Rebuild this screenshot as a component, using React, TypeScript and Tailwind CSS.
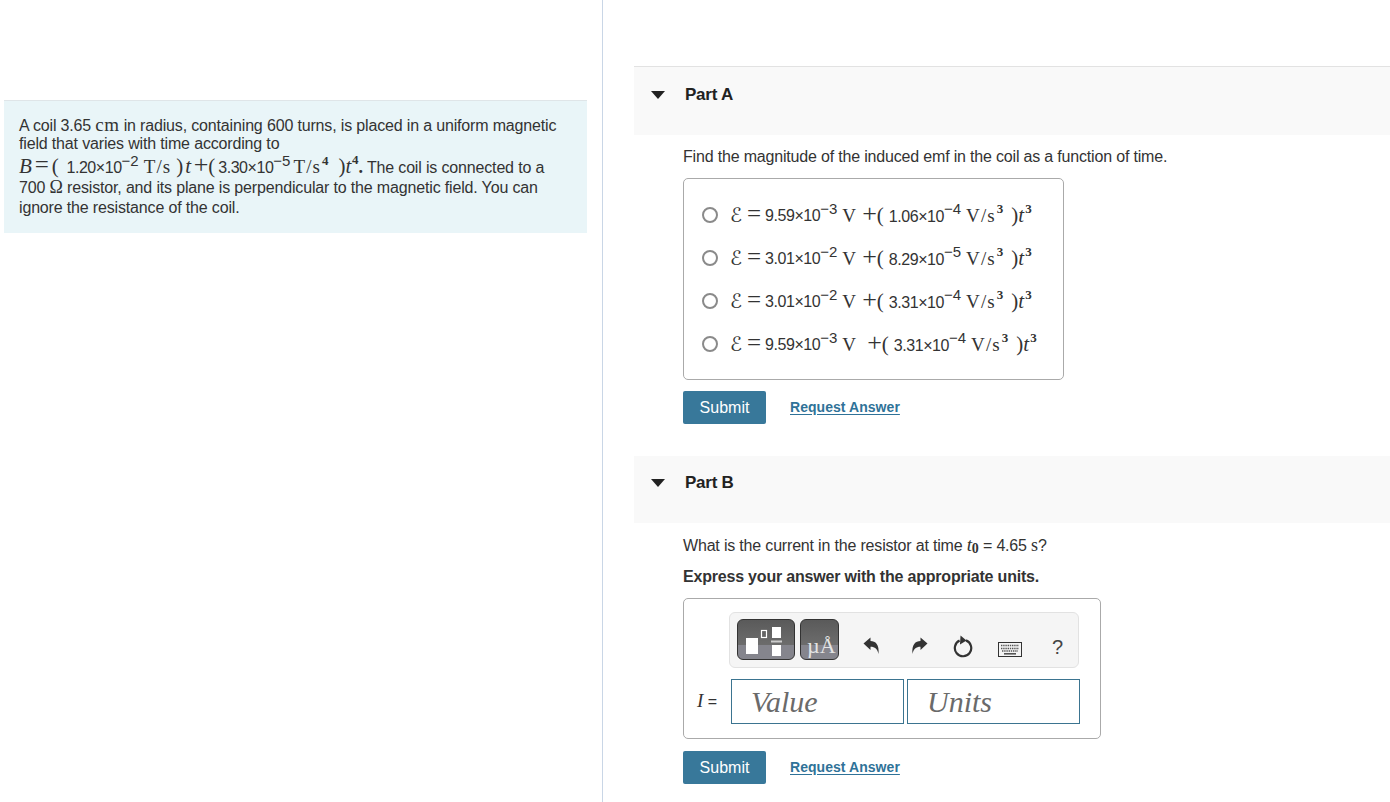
import React from 'react';

const serif = "font-['Liberation_Serif',serif]";

const Sup: React.FC<{ children: React.ReactNode }> = ({ children }) => (
  <sup className={`${serif} relative top-[-1px] ml-[1px] align-super text-[13px] font-bold leading-none tracking-[0]`}>{children}</sup>
);

const Sci: React.FC<{ n: string; e: string }> = ({ n, e }) => (
  <span className="text-[16px] tracking-[-0.45px]">
    {n}×10<sup className="relative top-[-1px] align-super text-[15px] leading-none tracking-[0]">{e}</sup>
  </span>
);

const Unit: React.FC<{ children: React.ReactNode }> = ({ children }) => (
  <span className={`${serif} text-[19px] tracking-[1.1px] text-[#333]`}>{children}</span>
);

const options = [
  { a: '9.59', ae: '−3', b: '1.06', be: '−4', wide: false },
  { a: '3.01', ae: '−2', b: '8.29', be: '−5', wide: false },
  { a: '3.01', ae: '−2', b: '3.31', be: '−4', wide: false },
  { a: '9.59', ae: '−3', b: '3.31', be: '−4', wide: true },
];

const PartHeader: React.FC<{ title: string; first?: boolean; className?: string }> = ({ title, first, className }) => (
  <div className={`flex items-start bg-[#f9f9f9] pl-[17px] ${className}`}>
    <svg width="14" height="8" viewBox="0 0 14 8" className={`shrink-0 ${first ? 'mt-[24px]' : 'mt-[23px]'}`}>
      <path d="M0 0H14L7 8Z" fill="#222" />
    </svg>
    <h2 className={`ml-[20px] text-[17px] font-bold leading-5 tracking-[-0.25px] text-[#222] ${first ? 'mt-[18px]' : 'mt-[17px]'}`}>{title}</h2>
  </div>
);

const Actions: React.FC = () => (
  <div className="flex items-center">
    <button className="h-[33px] w-[83px] rounded-[2px] bg-[#38789a] text-[16px] text-white">Submit</button>
    <a className="ml-6 text-[14px] font-bold tracking-[0.05px] text-[#2f7298] underline underline-offset-2">Request Answer</a>
  </div>
);

const ToolButton: React.FC<{ className: string; children: React.ReactNode }> = ({ className, children }) => (
  <div className={`relative mt-[6px] h-[41px] shrink-0 self-start overflow-hidden rounded-[6px] border border-[#333] bg-[linear-gradient(#5a5a5a,#6c6c6c_63%,#85858d_63%,#85858d)] ${className}`}>
    {children}
  </div>
);

export default function App() {
  return (
    <div className="flex h-[802px] overflow-hidden bg-white font-['Liberation_Sans',sans-serif] text-[#333]">
      {/* Left column */}
      <div className="w-[603px] shrink-0 border-r border-[#c9d6e6] pl-1 pr-[15px] pt-[100px]">
        <div className="h-[133px] border-t border-[#dfe5e8] bg-[#e9f5f8] pl-[15px] pr-6 pt-[14px] text-[16px] leading-[20px] tracking-[-0.16px]">
          <p className="h-[19px] whitespace-nowrap">
            A coil 3.65 <span className={`${serif} text-[19px] tracking-[0.4px]`}>cm</span> in radius, containing 600 turns, is placed in a uniform magnetic
          </p>
          <p className="h-[20px]">field that varies with time according to</p>
          <p className="h-[24px] whitespace-nowrap">
            <span className={`${serif} text-[21px] italic`}>B</span>
            <span className={`${serif} ml-[3px] text-[25px]`}>=</span>
            <span className={`${serif} ml-[3px] text-[21px]`}>(</span>
            <span className="ml-[8px]"><Sci n="1.20" e="−2" /></span>
            <span className="ml-[5px]"><Unit>T/s</Unit></span>
            <span className={`${serif} ml-[5px] text-[21px]`}>)<i className="ml-[2px]">t</i></span>
            <span className={`${serif} ml-[3px] text-[26px]`}>+</span>
            <span className={`${serif} text-[21px]`}>(</span>
            <span className="ml-[3px]"><Sci n="3.30" e="−5" /></span>
            <span className="ml-[3px]"><Unit>T/s<Sup>4</Sup></Unit></span>
            <span className={`${serif} ml-[10px] text-[21px]`}>)<i>t</i><Sup>4</Sup></span>
            <b className={`${serif} text-[18px]`}>.</b> The coil is connected to a
          </p>
          <p className="-mt-[1px] h-[21px] whitespace-nowrap">
            700 <span className={`${serif} text-[18px]`}>Ω</span> resistor, and its plane is perpendicular to the magnetic field. You can
          </p>
          <p>ignore the resistance of the coil.</p>
        </div>
      </div>

      {/* Right column */}
      <div className="min-w-0 flex-1 pl-[31px] pt-[66px]">
        <PartHeader title="Part A" first className="h-[69px] border-t border-[#e2e2e2]" />
        <div className="pl-[49px]">
          <p className="mt-[12px] text-[16px] leading-5 tracking-[-0.18px]">Find the magnitude of the induced emf in the coil as a function of time.</p>
          <div className="mt-[11px] flex h-[202px] w-[381px] flex-col rounded-[5px] border border-[#aaa] pl-[18px] pt-[14px]">
            {options.map((o, i) => (
              <div key={i} className="flex h-[43px] items-center whitespace-nowrap">
                <span className="h-[16px] w-[16px] shrink-0 rounded-full border-2 border-[#8a8a8a] bg-white" />
                <span className="ml-[12px] flex items-baseline leading-[20px]">
                  <span className="w-[14px] font-['DejaVu_Sans',sans-serif] text-[20px]">ℰ</span>
                  <span className={`${serif} ml-[3px] mr-[4px] text-[25px]`}>=</span>
                  <Sci n={o.a} e={o.ae} />
                  <span className="ml-[5px]"><Unit>V</Unit></span>
                  <span className={`${serif} text-[26px] ${o.wide ? 'ml-[10px]' : 'ml-[5px]'}`}>+</span>
                  <span className={`${serif} text-[21px]`}>(</span>
                  <span className="ml-[5px]"><Sci n={o.b} e={o.be} /></span>
                  <span className="ml-[5px]"><Unit>V/s<Sup>3</Sup></Unit></span>
                  <span className={`${serif} ml-[8px] text-[21px]`}>)<i>t</i><Sup>3</Sup></span>
                </span>
              </div>
            ))}
          </div>
          <div className="mt-[11px]"><Actions /></div>
        </div>

        <PartHeader title="Part B" className="mt-[32px] h-[67px]" />
        <div className="pl-[49px]">
          <p className="mt-[12px] h-5 text-[16px] leading-5 tracking-[-0.18px]">
            What is the current in the resistor at time <span className={`${serif} text-[19px] italic`}>t</span><span className={`${serif} relative top-[2px] text-[14px] font-bold`}>0</span> = 4.65 <span className={`${serif} text-[18px]`}>s</span>?
          </p>
          <p className="mt-[12px] text-[16px] font-bold leading-5 tracking-[-0.2px]">Express your answer with the appropriate units.</p>
          <div className="mt-[11px] h-[141px] w-[418px] rounded-[5px] border border-[#aaa] pl-[13px] pt-[13px]">
            <div className="ml-[32px] flex h-[56px] w-[350px] items-center rounded-[6px] border border-[#e2e2e2] bg-[#f5f5f5] pl-[7px]">
              <ToolButton className="w-[58px]">
                <svg width="56" height="39" viewBox="0 0 56 39" className="block">
                  <rect x="8" y="18" width="12" height="16" fill="#fff" />
                  <rect x="23.5" y="10.5" width="5" height="7" fill="none" stroke="#fff" strokeWidth="1.2" />
                  <rect x="34" y="7" width="9" height="11" fill="#fff" />
                  <rect x="33" y="20.5" width="11" height="2" fill="#ccc" />
                  <rect x="34" y="25" width="9" height="11" fill="#fff" />
                </svg>
              </ToolButton>
              <ToolButton className="ml-[5px] w-[39px]">
                <span className={`${serif} absolute bottom-[2px] left-[6px] whitespace-nowrap text-[22px] leading-none text-[#e4e4e4]`}>µÅ</span>
              </ToolButton>
              <svg width="18" height="18" viewBox="0 0 18 18" className="ml-[24px] mt-[12px] shrink-0">
                <path d="M0.5 6.5 7.5 0.5V4C12.5 4 16.5 7.5 15.5 17 14.5 12 12 9.8 7.5 9.8V13Z" fill="#333" />
              </svg>
              <svg width="18" height="18" viewBox="0 0 18 18" className="ml-[29px] mt-[12px] shrink-0">
                <path d="M17.5 6.5 10.5 0.5V4C5.5 4 1.5 7.5 2.5 17 3.5 12 6 9.8 10.5 9.8V13Z" fill="#333" />
              </svg>
              <svg width="20" height="24" viewBox="0 0 20 24" className="ml-[25px] mt-[14px] shrink-0">
                <path d="M6.6 5.6A8.2 8.2 0 1 0 13 5.4" fill="none" stroke="#333" strokeWidth="2.2" />
                <path d="M7.5 0.5 13.5 5.5 7 9.5Z" fill="#333" />
              </svg>
              <svg width="24" height="15" viewBox="0 0 24 15" className="ml-[25px] mt-[18px] shrink-0">
                <rect x="0.5" y="0.5" width="23" height="14" fill="#f4f4f4" stroke="#333" />
                <path d="M3 3.5H21M3 6.5H21M4 9H20" stroke="#555" strokeWidth="1.5" strokeDasharray="1.4 0.8" />
                <rect x="6" y="11" width="12" height="1.6" fill="#555" />
              </svg>
              <span className="ml-[30px] mt-[14px] text-[20px] leading-none text-[#444]">?</span>
            </div>
            <div className="mt-[11px] flex items-center">
              <span className={`${serif} w-[34px] text-[19px] italic`}>I<span className="font-['Liberation_Sans',sans-serif] text-[16px] not-italic"> =</span></span>
              <div className={`${serif} flex h-[45px] w-[173px] items-center border border-[#3b7490] pl-[19px] text-[30px] italic text-[#6a6a6a]`}>Value</div>
              <div className={`${serif} ml-[3px] flex h-[45px] w-[173px] items-center border border-[#3b7490] pl-[19px] text-[30px] italic text-[#6a6a6a]`}>Units</div>
            </div>
          </div>
          <div className="mt-[12px]"><Actions /></div>
        </div>
      </div>
    </div>
  );
}
